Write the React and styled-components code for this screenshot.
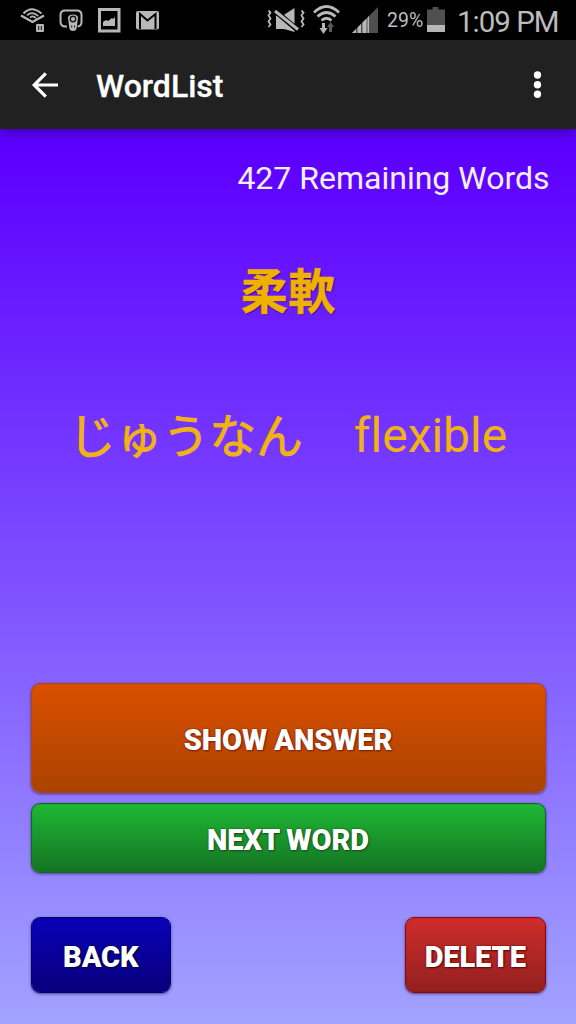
import React from "react";
import styled, { createGlobalStyle } from "styled-components";

const GlobalStyle = createGlobalStyle`
  * { box-sizing: border-box; }
  body { margin: 0; background: #000; }
`;

const Screen = styled.div`
  display: flex;
  flex-direction: column;
  width: 576px;
  height: 1024px;
  overflow: hidden;
  font-family: Roboto, "Noto Sans CJK JP", sans-serif;
`;

const StatusBar = styled.header`
  display: flex;
  align-items: flex-start;
  justify-content: space-between;
  flex: none;
  height: 40px;
  background: #000;
  color: #bcbcbc;
`;

const StatusIcons = styled.div`
  display: flex;
  svg { display: block; flex: none; }
`;

const BatteryLevel = styled.span`
  width: 40px;
  line-height: 40px;
  font-size: 19.5px;
  padding-top: 1px;
  margin-left: 2px;
  white-space: nowrap;
`;

const Clock = styled.span`
  width: 131px;
  padding: 2px 0 0 12px;
  line-height: 40px;
  font-size: 29.5px;
  letter-spacing: -1px;
  white-space: nowrap;
`;

const AppBar = styled.nav`
  display: flex;
  align-items: center;
  flex: none;
  height: 89px;
  padding: 0 24px 0 24px;
  background: #212121;
  box-shadow: 0 2px 12px rgba(0, 0, 0, 0.4);
  z-index: 1;
`;

const IconButton = styled.button`
  display: flex;
  padding: 0;
  border: 0;
  background: none;
  color: #fff;
`;

const Title = styled.h1`
  flex: 1;
  margin: 2px 0 0 30px;
  font-size: 32px;
  font-weight: 500;
  line-height: 40px;
  color: #fff;
  -webkit-text-stroke: 0.3px #fff;
`;

const Page = styled.main`
  display: flex;
  flex-direction: column;
  flex: 1;
  padding: 29px 30.5px 31px;
  background: linear-gradient(#5b00ff, #5d00ff 3%, #a1a3ff);
`;

const Remaining = styled.p`
  margin: 0 -4px 0 0;
  line-height: 40px;
  font-size: 32px;
  text-align: right;
  color: #f4efff;
`;

const Word = styled.h2`
  margin: 59px 0 0;
  height: 72px;
  line-height: 72px;
  font-size: 47.5px;
  font-weight: 700;
  text-align: center;
  color: #f0b000;
  text-shadow: 1px 1px 1px rgba(20, 0, 80, 0.75);
  -webkit-text-stroke: 0.4px #f0b000;
`;

const Answer = styled.p`
  display: flex;
  justify-content: center;
  margin: 71px 0 0;
  height: 72px;
  line-height: 72px;
  font-size: 48px;
  font-variant-ligatures: none;
  white-space: pre;
  color: #f0b313;
`;

const Reading = styled.span`
  width: 285px;
  padding-top: 1px;
  font-size: 46.8px;
  -webkit-text-stroke: 0.9px #f0b313;
`;

const Actions = styled.div`
  display: flex;
  flex-direction: column;
  gap: 10px;
  margin-top: auto;
`;

const Footer = styled.div`
  display: flex;
  justify-content: space-between;
  margin-top: 44px;
`;

const tones = {
  orange: ["#d95000", "#ac4200", "#b84407", "#7c1d0b"],
  green: ["#1eb834", "#157323", "#0b6e13", "#154f1a"],
  blue: ["#0b00b8", "#07007c", "#04006a", "#000039"],
  red: ["#cf2d2b", "#92201f", "#960505", "#5d0505"],
};

const ActionButton = styled.button`
  width: ${(p) => p.$width || "100%"};
  height: ${(p) => p.$height}px;
  padding: 3px 0 0;
  border: 1px solid ${(p) => tones[p.$tone][2]};
  border-radius: 9px;
  background: linear-gradient(${(p) => tones[p.$tone][0]}, ${(p) => tones[p.$tone][1]}) padding-box;
  box-shadow: inset 0 0 1px ${(p) => tones[p.$tone][2]}, 0 1px 3px rgba(40, 30, 100, 0.7);
  font: 900 29px/36px Roboto, sans-serif;
  letter-spacing: -0.1px;
  color: #fff;
  text-shadow: 1px 1px 2px ${(p) => tones[p.$tone][3]}, 0 0 2px ${(p) => tones[p.$tone][3]};
`;

const NotificationIcons = () => (
  <svg width="180" height="40" fill="none" stroke="#b8b8b8" strokeWidth="2">
    <path d="M21 15.5 32.5 22 44 15.5" strokeWidth="2.3" />
    <path d="M23.5 13.5Q31.5 5 41.5 13.5" />
    <path d="M27 15.3Q32.5 10.7 38.2 16.2M30 17.6Q33 15 36 18.3" strokeWidth="1.7" />
    <rect x="36" y="24" width="8" height="8" rx="1" fill="#b8b8b8" stroke="none" />
    <path d="M38.7 26v4M41.3 26v4" stroke="#111" strokeWidth="1" />
    <path d="M67 26.5h-1.5Q60.5 26.5 60.5 21.5V15Q60.5 10.5 65 10.5H77Q81.5 10.5 81.5 15V22Q81.5 26 77.5 26.5" />
    <path d="M68 18Q68 14.5 73 14.5T78 18L76.5 29Q76 31 73 31T69.5 29Z" fill="#b8b8b8" stroke="none" />
    <circle cx="73" cy="19" r="2.7" stroke="#161616" strokeWidth="1.4" />
    <path d="M71.7 25.5v2M74.5 25.5v2" stroke="#222" strokeWidth="1" />
    <rect x="99.5" y="9.5" width="19.5" height="21.5" strokeWidth="3" />
    <path d="M103 26v-4l3-2 2 1 4-3 1 1 2-2v9Z" fill="#b8b8b8" stroke="none" />
    <rect x="136" y="11" width="23" height="18.5" rx="2" fill="#b8b8b8" stroke="none" />
    <path d="M140 29V14l7.5 6.5L155.5 14v15" stroke="#000" strokeWidth="2" />
  </svg>
);

const SystemIcons = () => (
  <svg width="121" height="40" viewBox="264 0 121 40" fill="none" stroke="#b8b8b8">
    <path d="M276 15.500v13.500h8l10.500 3V8L283 15.500Z" fill="#b8b8b8" stroke="none" />
    <path d="M274 10 299 31" stroke="#000" strokeWidth="5.5" />
    <path d="M275 11 298 29.5" strokeWidth="3" />
    <path d="M268.500 10.500l2 2-2 3 2 3-2 3 2 3-2 2.500M301.500 10.500l2 2-2 3 2 3-2 3 2 3-2 2.500" strokeWidth="1.8" />
    <path d="M314 12.500Q326.500 .5 339 12.500M317.500 16.500Q326.500 8.500 335.500 16.500M321.500 20.500Q326.500 16 331.500 20.500" strokeWidth="2.7" />
    <path d="M322 23h3v5h2.500l-4 6-4-6H322Z" fill="#b8b8b8" stroke="none" />
    <path d="M329 32h3v-5h2l-3.500-5-3.500 5h2Z" fill="#5a5a5a" stroke="none" />
    <path d="M352 33 378 7v26Z" fill="#505050" stroke="none" />
    <path d="M352 33l4-4v4ZM357.500 33v-5.500l3.500-3.500v9ZM362.500 33V22.500l4-4V33ZM367.500 33V17.500l1.500-1.500V33Z" fill="#b8b8b8" stroke="none" />
  </svg>
);

const BatteryIcon = () => (
  <svg width="18" height="40" viewBox="427 0 18 40">
    <path d="M427 9.500h5.500V7h6v2.500h6.500V25h-18Z" fill="#505050" />
    <path d="M427 25h18v7h-18Z" fill="#b8b8b8" />
  </svg>
);

export default function App() {
  return (
    <Screen>
      <GlobalStyle />
      <StatusBar>
        <NotificationIcons />
        <StatusIcons>
          <SystemIcons />
          <BatteryLevel>29%</BatteryLevel>
          <BatteryIcon />
          <Clock>1:09 PM</Clock>
        </StatusIcons>
      </StatusBar>
      <AppBar>
        <IconButton aria-label="Back">
          <svg width="42" height="42" viewBox="0 0 42 42" fill="none" stroke="#fff" strokeWidth="3.2">
            <path d="M34 21H10M21.800 9.300 10.200 21 21.800 32.700" />
          </svg>
        </IconButton>
        <Title>WordList</Title>
        <IconButton aria-label="More">
          <svg width="30" height="42" viewBox="522 64 30 42" fill="#fff" stroke="#111" strokeWidth="1" paintOrder="stroke">
            <circle cx="537.500" cy="75" r="3.700" />
            <circle cx="537.500" cy="84.700" r="3.700" />
            <circle cx="537.500" cy="94.300" r="3.700" />
          </svg>
        </IconButton>
      </AppBar>
      <Page>
        <Remaining>427 Remaining Words</Remaining>
        <Word lang="ja">柔軟</Word>
        <Answer lang="ja">
          <Reading>じゅうなん　</Reading>
          <span>flexible</span>
        </Answer>
        <Actions>
          <ActionButton $tone="orange" $height={110}>SHOW ANSWER</ActionButton>
          <ActionButton $tone="green" $height={70}>NEXT WORD</ActionButton>
        </Actions>
        <Footer>
          <ActionButton $tone="blue" $width="140.5px" $height={76}>BACK</ActionButton>
          <ActionButton $tone="red" $width="140.5px" $height={76}>DELETE</ActionButton>
        </Footer>
      </Page>
    </Screen>
  );
}
